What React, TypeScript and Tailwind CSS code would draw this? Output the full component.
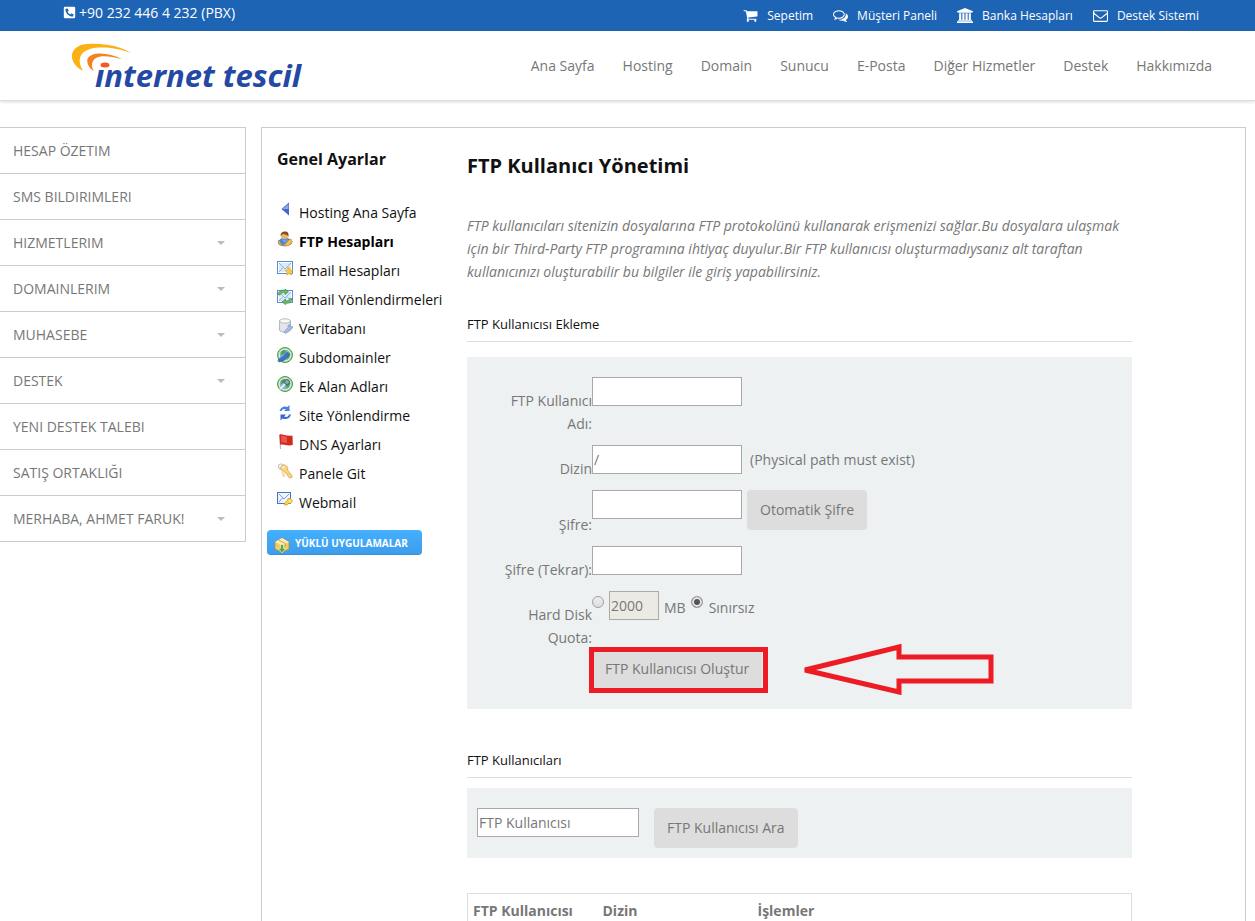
import type { ReactNode } from 'react'
import { FaPhoneSquareAlt } from 'react-icons/fa'

const navItems = ['Ana Sayfa', 'Hosting', 'Domain', 'Sunucu', 'E-Posta', 'Diğer Hizmetler', 'Destek', 'Hakkımızda']

const sideItems = [
  { label: 'HESAP ÖZETIM' },
  { label: 'SMS BILDIRIMLERI' },
  { label: 'HIZMETLERIM', sub: true },
  { label: 'DOMAINLERIM', sub: true },
  { label: 'MUHASEBE', sub: true },
  { label: 'DESTEK', sub: true },
  { label: 'YENI DESTEK TALEBI' },
  { label: 'SATIŞ ORTAKLIĞI' },
  { label: 'MERHABA, AHMET FARUK!', sub: true },
]

function CartIcon() {
  return (
    <svg viewBox="0 0 1792 1792" className="size-[15px]" fill="currentColor" aria-hidden="true">
      <path d="M704 1536q0 52-38 90t-90 38-90-38-38-90 38-90 90-38 90 38 38 90zm896 0q0 52-38 90t-90 38-90-38-38-90 38-90 90-38 90 38 38 90zm128-1088v512q0 24-16.500 42.500t-40.500 21.500l-1044 122q13 60 13 70 0 16-24 64h920q26 0 45 19t19 45-19 45-45 19h-1024q-26 0-45-19t-19-45q0-11 8-31.500t16-36 21.500-40 15.500-29.500l-177-823h-204q-26 0-45-19t-19-45 19-45 45-19h256q16 0 28.500 6.500t19.500 15.500 13 24.500 8 26 5.500 29.500 4.500 26h1201q26 0 45 19t19 45z" />
    </svg>
  )
}

function CommentsIcon() {
  return (
    <svg viewBox="0 0 1792 1792" className="size-[15px]" fill="currentColor" aria-hidden="true">
      <path d="M704 384q-153 0-286 52t-211.500 141-78.500 191q0 82 53 158t149 132l97 56-35 84q34-20 62-39l44-31 53 10q78 14 153 14 153 0 286-52t211.500-141 78.500-191-78.500-191-211.500-141-286-52zm0-128q191 0 353.500 68.500t256.500 186.500 94 257-94 257-256.500 186.500-353.500 68.500q-86 0-176-16-124 88-278 128-36 9-86 16h-3q-11 0-20.500-8t-11.500-21q-1-3-1-6.500t.5-6.500 2-6l2.500-5 3.500-5.500 4-5 4.500-5 4-4.500q5-6 23-25t26-29.500 22.500-29 25-38.500 20.500-44q-124-72-195-177t-71-224q0-139 94-257t256.500-186.500 353.500-68.500zm822 1169q10 24 20.500 44t25 38.500 22.500 29 26 29.500 23 25q1 1 4 4.500t4.500 5 4 5 3.500 5.500l2.500 5 2 6 .5 6.500-1 6.500q-3 14-13 22t-22 7q-50-7-86-16-154-40-278-128-90 16-176 16-271 0-472-132 58 4 88 4 161 0 309-45t264-129q125-92 192-212t67-254q0-77-23-152 129 71 204 178t75 230q0 120-71 224.500t-195 176.500z" />
    </svg>
  )
}

function BankIcon() {
  return (
    <svg viewBox="0 0 1920 1792" className="h-[15px] w-4" fill="currentColor" aria-hidden="true">
      <path d="M960 0l960 384v128h-128q0 26-20.500 45t-48.500 19h-1526q-28 0-48.500-19t-20.500-45h-128v-128zM256 640h256v768h128v-768h256v768h128v-768h256v768h128v-768h256v768h59q28 0 48.500 19t20.500 45v64h-1664v-64q0-26 20.500-45t48.500-19h59zM1851 1600q28 0 48.500 19t20.500 45v128h-1920v-128q0-26 20.500-45t48.500-19z" />
    </svg>
  )
}

function EnvelopeIcon() {
  return (
    <svg viewBox="0 0 1792 1792" className="size-[15px]" fill="currentColor" aria-hidden="true">
      <path d="M1664 1504v-768q-32 36-69 66-268 206-426 338-51 43-83 67t-86.500 48.500-102.500 24.500h-2q-48 0-102.500-24.500t-86.500-48.500-83-67q-158-132-426-338-37-30-69-66v768q0 13 9.500 22.500t22.500 9.500h1472q13 0 22.500-9.500t9.500-22.500zm0-1051v-24.500l-.5-13-3-12.500-5.500-9-9-7.500-14-2.500h-1472q-13 0-22.500 9.500t-9.500 22.500q0 168 147 284 193 152 401 317 6 5 35 29.500t46 37.500 44.500 31.500 50.500 27.500 43 9h2q20 0 43-9t50.500-27.500 44.500-31.500 46-37.500 35-29.500q208-165 401-317 54-43 100.500-115.500t46.500-131.500zm128-37v1088q0 66-47 113t-113 47h-1472q-66 0-113-47t-47-113v-1088q0-66 47-113t113-47h1472q66 0 113 47t47 113z" />
    </svg>
  )
}

const topLinks = [
  { label: 'Sepetim', icon: <CartIcon /> },
  { label: 'Müşteri Paneli', icon: <CommentsIcon /> },
  { label: 'Banka Hesapları', icon: <BankIcon /> },
  { label: 'Destek Sistemi', icon: <EnvelopeIcon /> },
]

function Logo() {
  return (
    <svg viewBox="0 -7 240 64" className="h-16 w-60" role="img" aria-label="internet tescil">
      <path d="M13 30C5 26 1 19 2 13C4 6 11 3 18 3C36 2 52 6 61 12C48 7 30 5 20 8C9 11 7 20 13 30Z" fill="#fbb116" />
      <path d="M24 30C18 27 16 20 18 17C23 10 40 12 52 18C40 15 31 14 26 17C21 20 21 26 24 30Z" fill="#f58220" />
      <ellipse cx="35" cy="24" rx="4.500" ry="2.500" fill="#f15a24" />
      <text
        x="25"
        y="46"
        fill="#2449a4"
        className="font-['Noto_Sans','Open_Sans',sans-serif] text-[31px] font-bold italic"
      >
        ınternet tescil
      </text>
    </svg>
  )
}

// 16px icons of the hosting menu
function MenuSvg({ children }: { children: ReactNode }) {
  return (
    <svg viewBox="0 0 16 16" className="mt-1 size-4 shrink-0" aria-hidden="true">
      {children}
    </svg>
  )
}

function Envelope() {
  return (
    <>
      <rect x="0.500" y="1.500" width="15" height="12" fill="#dcebfa" stroke="#5b8fd0" />
      <rect x="1.500" y="2.500" width="13" height="10" fill="none" stroke="#fff" />
      <path d="M2 3l6 6 6-6M2 12l4-4.500M14 12l-4-4.500" fill="none" stroke="#8db2e0" />
    </>
  )
}

function Globe() {
  return (
    <>
      <circle cx="8" cy="8" r="7.500" fill="#a5d6a0" stroke="#4b9a4b" />
      <circle cx="8" cy="8" r="5.800" fill="#7fb0d2" stroke="#dff1dc" />
      <path d="M4 4.500l4-1.500 1 2-2 2-2.500 1zM9 8l3-2.500 1.500 2L11 11.500 9 11z" fill="#4f9d55" />
    </>
  )
}

const menuItems = [
  {
    label: 'Hosting Ana Sayfa',
    icon: (
      <>
        <path d="M12 .500v13L4.500 7z" fill="#4763cf" />
        <path d="M11.500 2v5H5.500z" fill="#8ea6ee" />
      </>
    ),
  },
  {
    label: 'FTP Hesapları',
    active: true,
    icon: (
      <>
        <path d="M1.500 13c0-4 2-5.500 5-5.500h3c3 0 5 2 5 5-3 3-10 3-13 .500z" fill="#4c87d6" stroke="#2f62aa" strokeWidth="0.600" />
        <circle cx="7.500" cy="4.500" r="3.500" fill="#f0b36c" />
        <path d="M3.500 5C3.500 2 5 .500 8 .500S12 2.500 11.500 6C10.500 3 7.500 4 6.500 2.800 5.500 3.500 4.500 4 3.500 5z" fill="#8a4b14" />
        <path d="M1.500 9l3 4.500c3 1 5-1 6-3.500l3.500-2 1.500 3-4 3.500-2.500.500-3-1-3.500-.500-1.500-3z" fill="#f4c14b" stroke="#c4872a" strokeWidth="0.600" />
        <path d="M4.500 8.500L8 12l3-3.500z" fill="#6fa5e6" />
      </>
    ),
  },
  {
    label: 'Email Hesapları',
    icon: (
      <>
        <Envelope />
        <path d="M12 7l1.300 2.800 2.700.4-2 2 .5 3-2.500-1.500L9.500 15.200l.5-3-2-2 2.700-.4z" fill="#ffc63d" stroke="#e2952a" strokeWidth="0.500" />
      </>
    ),
  },
  {
    label: 'Email Yönlendirmeleri',
    icon: (
      <>
        <Envelope />
        <path d="M.500 5.500C2 1.500 5 .500 8 1.500V0l3.500 2.800L8 5.500V4C5.500 3 4 4 3 6z" fill="#6dbb6a" stroke="#2f7f37" strokeWidth="0.600" />
        <path d="M15.500 9.500C14.500 13.500 11.500 15 8.500 14v1.700L5 12.800 8.500 10v1.600c2 .800 3.500 0 4.300-2.100z" fill="#6dbb6a" stroke="#2f7f37" strokeWidth="0.600" />
      </>
    ),
  },
  {
    label: 'Veritabanı',
    icon: (
      <>
        <path d="M2.500 3v9c0 3 11 3 11 0V3z" fill="#e4e5e9" stroke="#a5a9b4" strokeWidth="0.800" />
        <ellipse cx="8" cy="3" rx="5.500" ry="2.200" fill="#fafafa" stroke="#a5a9b4" strokeWidth="0.800" />
        <path d="M7 14l4-4.500c-.500-2 1-3.500 2.500-3.200L12.500 8l1 1.200 2-1c.500 2-1 3.500-3 3.300L9 15.500z" fill="#a9c0e2" stroke="#6d8bbd" strokeWidth="0.600" />
      </>
    ),
  },
  {
    label: 'Subdomainler',
    icon: (
      <>
        <Globe />
        <path d="M1 13.500c1-3 4-2 5-4 2-1 2-3 4-4l2 1-1 3-4 4-5 1.500z" fill="#3d74c6" stroke="#2a559b" strokeWidth="0.600" />
      </>
    ),
  },
  {
    label: 'Ek Alan Adları',
    icon: (
      <>
        <Globe />
        <path d="M3 13l5-5" stroke="#e9eef0" strokeWidth="2" />
        <circle cx="10" cy="6" r="2.500" fill="#8ba9b5" stroke="#3e5660" strokeWidth="0.800" />
      </>
    ),
  },
  {
    label: 'Site Yönlendirme',
    icon: (
      <>
        <path d="M2.500 6C4 2 7 .500 10.500 2L12.500 0v6H7L8.800 4.200C7 3.500 5 4 4.500 6z" fill="#4a80dc" />
        <path d="M14 9.500C13 13.500 9 15 5.500 13.500L3.500 15.500V9.500H9L7.200 11.500c2.300 1 4.300.3 4.800-2z" fill="#3a6bca" />
      </>
    ),
  },
  {
    label: 'DNS Ayarları',
    icon: (
      <>
        <path d="M2.500 1l1 14" stroke="#b8b0ac" strokeWidth="1" />
        <path d="M2.500.500C6-.500 8 2.500 15.500 1.500l.3 9.500C10 12.500 7 9.500 3.200 11z" fill="#d32a1e" />
        <path d="M4 1.500c3-.5 4 1.500 6 1.500V9C8 8.500 6 8 4.500 8.500z" fill="#e8584a" />
      </>
    ),
  },
  {
    label: 'Panele Git',
    icon: (
      <>
        <circle cx="4" cy="3.500" r="2.500" fill="none" stroke="#c2c2c2" strokeWidth="1.200" />
        <path d="M4.500 3C8 0 12 4 10.500 7l4.500 5.500v2l-2.500.5-5-6.500C4 8.500 2.500 5 4.500 3z" fill="#f7d37c" stroke="#d79e3f" strokeWidth="0.700" />
        <path d="M4.500 8l1 6h2.500l-.500-5" fill="#f4ddb0" />
        <circle cx="6.500" cy="4.500" r="1" fill="#fff" />
      </>
    ),
  },
  {
    label: 'Webmail',
    icon: (
      <>
        <rect x="0.500" y="0.500" width="13" height="11" fill="#eef5ff" stroke="#4674c8" />
        <path d="M2 2l5 5 5-5M2 10l3.500-4" fill="none" stroke="#7b9fdc" />
        <path d="M13.500 6.500l2 2.500-2 2.500h-2L10 13H7.500v-2L10.500 8.500l.5-2z" fill="#f8d44c" stroke="#c98f1c" strokeWidth="0.700" />
        <circle cx="13" cy="9" r="0.800" fill="#fff" />
      </>
    ),
  },
]

const inputClass = 'h-[29px] w-[150px] border border-[#a9a9a9] bg-white px-px text-[#777] outline-none'
const buttonClass = 'h-10 cursor-pointer rounded bg-[#ddd] px-[13px] pb-0.5 text-[#777]'
const radioClass =
  'mt-[5px] size-3 appearance-none rounded-full border border-[#a0a0a0] bg-linear-to-b from-[#eee] to-[#ddd] checked:bg-none checked:bg-[#555] checked:shadow-[inset_0_0_0_2px_#e6e6e6]'
const labelClass = 'pt-3 pl-[30px] text-right'

function SectionTitle({ children }: { children: ReactNode }) {
  return <h3 className="border-b border-[#ddd] pb-0.5 text-[13px] leading-[30px] text-[#111]">{children}</h3>
}

export default function App() {
  return (
    <div className="min-h-screen bg-white font-['Open_Sans','Noto_Sans',sans-serif] text-sm leading-[23px] text-[#777]">
      <div className="flex h-[31px] justify-between bg-[#1e64b4] pr-14 pl-[63px] text-white">
        <a href="#" className="flex items-center gap-[3px] pb-1.5">
          <FaPhoneSquareAlt className="size-[13px]" aria-hidden="true" />
          +90 232 446 4 232 (PBX)
        </a>
        <nav className="flex items-center gap-5 text-xs">
          {topLinks.map((link) => (
            <a key={link.label} href="#" className="flex items-center gap-[9px]">
              {link.icon}
              {link.label}
            </a>
          ))}
        </nav>
      </div>

      <header className="flex h-[70px] items-center justify-between border-b border-[#ddd] pr-[43px] pl-[70px] shadow-[0_1px_3px_rgba(0,0,0,0.15)]">
        <a href="#">
          <Logo />
        </a>
        <nav className="flex gap-7">
          {navItems.map((item) => (
            <a key={item} href="#">
              {item}
            </a>
          ))}
        </nav>
      </header>

      <div className="flex items-start gap-[15px] pt-[26px] pr-[9px]">
        <aside className="w-[246px] shrink-0 border-t border-r border-[#ccc]">
          {sideItems.map((item) => (
            <a
              key={item.label}
              href="#"
              className="flex h-[46px] items-center justify-between border-b border-[#ccc] pr-5 pl-[13px]"
            >
              {item.label}
              {item.sub && (
                <svg viewBox="0 0 8 4" className="h-1 w-2" aria-hidden="true">
                  <path d="M0 0h8L4 4z" fill="#bbb" />
                </svg>
              )}
            </a>
          ))}
        </aside>

        <div className="flex min-w-0 flex-1 border border-[#ccc] pb-10">
          <div className="w-[205px] shrink-0 pt-[18px]">
            <h2 className="pl-[15px] text-base leading-[26px] font-bold text-[#111]">Genel Ayarlar</h2>
            <ul className="mt-[26px] pl-[15px] text-[#111]">
              {menuItems.map((item) => (
                <li key={item.label}>
                  <a href="#" className={item.active ? 'flex h-[29px] gap-1.5 font-bold text-black' : 'flex h-[29px] gap-1.5'}>
                    <MenuSvg>{item.icon}</MenuSvg>
                    <span className="pt-[3px] whitespace-nowrap">{item.label}</span>
                  </a>
                </li>
              ))}
            </ul>
            <button
              type="button"
              className="mt-[13px] ml-[5px] flex h-[25px] w-[155px] cursor-pointer items-center gap-[5px] rounded border-b border-[#3391dc] bg-linear-to-b from-[#44b0ff] to-[#3c9deb] pl-[7px] text-[10px] font-bold whitespace-nowrap text-white"
            >
              <svg viewBox="0 0 16 16" className="mt-1.5 size-4 shrink-0" aria-hidden="true">
                <path d="M8 1l7 4v7l-7 3.500L1 12V5z" fill="#f3c964" stroke="#b58a35" strokeWidth="0.700" />
                <path d="M8 1l7 4-7 3.500L1 5z" fill="#fdeeb8" />
                <path d="M4.500 3l7 3.500v3" stroke="#d9a13b" fill="none" />
                <path d="M6.500 7.500h3v4H12L8 16l-4-4.500h2.500z" fill="#5ea544" stroke="#eff8e4" strokeWidth="0.600" />
              </svg>
              <span className="pt-0.5">YÜKLÜ UYGULAMALAR</span>
            </button>
          </div>

          <main className="min-w-0 flex-1 pt-[22px] pr-[113px]">
            <h1 className="text-xl leading-8 font-bold text-[#111]">FTP Kullanıcı Yönetimi</h1>
            <p className="mt-8 italic">
              FTP kullanıcıları sitenizin dosyalarına FTP protokolünü kullanarak erişmenizi sağlar.Bu dosyalara ulaşmak
              için bir Third-Party FTP programına ihtiyaç duyulur.Bir FTP kullanıcısı oluşturmadıysanız alt taraftan
              kullanıcınızı oluşturabilir bu bilgiler ile giriş yapabilirsiniz.
            </p>

            <div className="mt-[26px]">
              <SectionTitle>FTP Kullanıcısı Ekleme</SectionTitle>
            </div>
            <form className="mt-[15px] bg-[#edf1f2] py-5">
              <div className="grid grid-cols-[125px_1fr] items-start gap-y-2.5">
                <label htmlFor="ftp-user" className={labelClass}>
                  FTP Kullanıcı Adı:
                </label>
                <input id="ftp-user" type="text" className={inputClass} />

                <label htmlFor="ftp-dir" className={labelClass}>
                  Dizin
                </label>
                <div className="flex items-center gap-2">
                  <input id="ftp-dir" type="text" defaultValue="/" className={inputClass} />
                  (Physical path must exist)
                </div>

                <label htmlFor="ftp-pass" className="self-end pl-[30px] text-right">
                  Şifre:
                </label>
                <div className="flex items-start gap-[5px] pb-1.5">
                  <input id="ftp-pass" type="password" className={inputClass} />
                  <button type="button" className={buttonClass}>
                    Otomatik Şifre
                  </button>
                </div>

                <label htmlFor="ftp-pass2" className={labelClass}>
                  Şifre (Tekrar):
                </label>
                <input id="ftp-pass2" type="password" className={inputClass} />

                <label htmlFor="ftp-quota" className={labelClass}>
                  Hard Disk Quota:
                </label>
                <div className="flex items-start gap-[5px]">
                  <input type="radio" name="quota" aria-label="MB" className={radioClass} />
                  <input
                    id="ftp-quota"
                    type="text"
                    defaultValue="2000"
                    disabled
                    className="h-[29px] w-[50px] border border-[#a9a9a9] bg-[#ebebe4] px-px"
                  />
                  <span className="pt-[5px]">MB</span>
                  <label className="flex items-start gap-1.5">
                    <input type="radio" name="quota" defaultChecked className={radioClass} />
                    <span className="pt-[5px]">Sınırsız</span>
                  </label>
                </div>
              </div>

              <div className="flex items-center gap-10 pl-[125px]">
                <div className="relative">
                  <button type="submit" className={buttonClass}>
                    FTP Kullanıcısı Oluştur
                  </button>
                  <span className="pointer-events-none absolute -top-0.5 -right-1.5 -bottom-1 -left-[3px] border-5 border-[#ed1c24]" />
                </div>
                <svg viewBox="0 0 194 52" className="-my-1.5 h-[52px] w-[194px]" aria-hidden="true">
                  <path d="M3 27L97 4V14H189V38H97V49Z" fill="none" stroke="#ed1c24" strokeWidth="5" />
                </svg>
              </div>
            </form>

            <div className="mt-9">
              <SectionTitle>FTP Kullanıcıları</SectionTitle>
            </div>
            <form className="mt-2.5 flex items-start gap-[15px] bg-[#edf1f2] px-2.5 pt-5 pb-2.5">
              <input
                type="text"
                aria-label="FTP Kullanıcısı"
                placeholder="FTP Kullanıcısı"
                className="h-[29px] w-[162px] border border-[#a9a9a9] bg-white px-px outline-none placeholder:text-[#777]"
              />
              <button type="submit" className={buttonClass}>
                FTP Kullanıcısı Ara
              </button>
            </form>

            <table className="mt-[35px] w-full border border-[#ddd] text-left">
              <thead>
                <tr className="h-[33px]">
                  <th className="w-[130px] pl-[5px]">FTP Kullanıcısı</th>
                  <th className="w-[155px] pl-[5px]">Dizin</th>
                  <th className="pl-[5px]">İşlemler</th>
                </tr>
              </thead>
            </table>
          </main>
        </div>
      </div>
    </div>
  )
}
